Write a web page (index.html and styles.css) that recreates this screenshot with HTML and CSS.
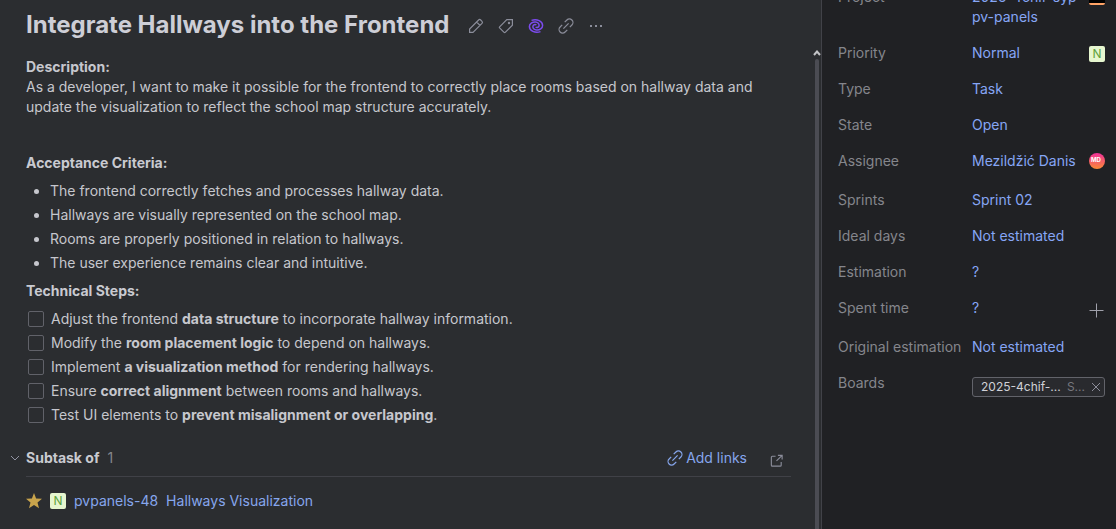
FILE: index.html
```html
<!DOCTYPE html>
<html lang="en">
<head>
<meta charset="utf-8">
<title>Integrate Hallways into the Frontend</title>
<link rel="stylesheet" href="styles.css">
</head>
<body>
<div class="app">
  <main class="issue">
    <header class="issue-header">
      <h1 class="title">Integrate Hallways into the Frontend</h1>
      <div class="toolbar">
        <button class="icon-button" aria-label="Edit"><svg class="icon" viewBox="0 0 16 16"><path d="M1.600 14.400V11L10.600 2a1.500 1.500 0 0 1 2.100 0l1.300 1.300a1.500 1.500 0 0 1 0 2.100L5 14.400ZM8.600 4l3.400 3.400"/></svg></button>
        <button class="icon-button" aria-label="Add tag"><svg class="icon" viewBox="0 0 16 16"><path d="M8.800 1.600h5.600v5.600L7.200 14.400a.8.8 0 0 1-1.100 0L1.600 9.900a.8.8 0 0 1 0-1.100Z"/><circle class="icon-dot" cx="11" cy="5" r="1.200"/></svg></button>
        <button class="icon-button icon-accent" aria-label="Assistant"><svg class="icon icon-swirl" viewBox="0 0 16 16"><path d="M3.500 2.400C9 .6 14.600 3.200 14.600 7.400 14.600 10.400 11.600 12.200 8.600 12 6 11.800 4.700 10.200 4.900 8.400 5.100 6.800 7 6 8.400 7"/><path d="M12.500 13.600C7 15.400 1.400 12.800 1.400 8.600 1.400 5.600 4.400 3.800 7.400 4 10 4.200 11.300 5.800 11.100 7.600 10.900 9.200 9 10 7.600 9"/></svg></button>
        <button class="icon-button" aria-label="Link issue"><svg class="icon" viewBox="0 0 16 16"><path d="M6.700 4.200 8.900 2A3.500 3.500 0 0 1 13.900 7L11.800 9.200M9.300 11.800 7.100 14A3.500 3.500 0 0 1 2.100 9L4.200 6.800M5.400 10.600 10.600 5.400"/></svg></button>
        <button class="icon-button" aria-label="More"><svg class="icon icon-solid" viewBox="0 0 16 16"><rect x="2" y="7" width="2" height="2"/><rect x="7" y="7" width="2" height="2"/><rect x="12" y="7" width="2" height="2"/></svg></button>
      </div>
    </header>
    <div class="scroll-area">
      <div class="content">
        <section class="description">
          <p><strong>Description:</strong><br>As a developer, I want to make it possible for the frontend to correctly place rooms based on hallway data and update the visualization to reflect the school map structure accurately.</p>
          <h2 class="heading heading-spaced">Acceptance Criteria:</h2>
          <ul class="bullets">
            <li>The frontend correctly fetches and processes hallway data.</li>
            <li>Hallways are visually represented on the school map.</li>
            <li>Rooms are properly positioned in relation to hallways.</li>
            <li>The user experience remains clear and intuitive.</li>
          </ul>
          <h2 class="heading">Technical Steps:</h2>
          <ul class="steps">
            <li><label class="step"><input class="check" type="checkbox"><span>Adjust the frontend <strong>data structure</strong> to incorporate hallway information.</span></label></li>
            <li><label class="step"><input class="check" type="checkbox"><span>Modify the <strong>room placement logic</strong> to depend on hallways.</span></label></li>
            <li><label class="step"><input class="check" type="checkbox"><span>Implement <strong>a visualization method</strong> for rendering hallways.</span></label></li>
            <li><label class="step"><input class="check" type="checkbox"><span>Ensure <strong>correct alignment</strong> between rooms and hallways.</span></label></li>
            <li><label class="step"><input class="check" type="checkbox"><span>Test UI elements to <strong>prevent misalignment or overlapping</strong>.</span></label></li>
          </ul>
        </section>
        <section class="links">
          <div class="links-header">
            <button class="toggle"><svg class="chevron" viewBox="0 0 10 10"><path d="M1 3 5 7 9 3"/></svg><span class="heading">Subtask of</span><span class="count">1</span></button>
            <button class="add-links"><svg class="icon" viewBox="0 0 16 16"><path d="M6.700 4.200 8.900 2A3.500 3.500 0 0 1 13.900 7L11.800 9.200M9.300 11.800 7.100 14A3.500 3.500 0 0 1 2.100 9L4.200 6.800M5.400 10.600 10.600 5.400"/></svg>Add links</button>
            <button class="icon-button open-links" aria-label="Open links"><svg class="icon icon-open" viewBox="0 0 16 16"><path d="M7 3.500H3.500a1 1 0 0 0-1 1v8.500a1 1 0 0 0 1 1H12a1 1 0 0 0 1-1V9.500M9.500 2.500H14V7M14 2.500 8 8.500"/></svg></button>
          </div>
          <div class="linked-issue">
            <button class="star" aria-label="Star"><svg class="star-icon" viewBox="0 0 16 16"><path d="M8 0 10.100 5.400 16 5.800 11.500 9.500 13 15.200 8 12 3 15.200 4.500 9.500 0 5.800 5.900 5.400Z"/></svg></button>
            <span class="priority">N</span>
            <a class="link" href="#">pvpanels-48</a>
            <a class="link" href="#">Hallways Visualization</a>
          </div>
        </section>
      </div>
      <div class="scrollbar">
        <svg class="scroll-arrow" viewBox="0 0 8 6"><path d="M1 5 4 1.500 7 5"/></svg>
        <div class="scroll-thumb"></div>
      </div>
    </div>
  </main>
  <aside class="sidebar">
    <div class="fields">
      <div class="field"><span class="name">Project</span><button class="value value-wide">2025-4chif-syp-pv-panels</button><span class="project-logo"></span></div>
      <div class="field"><span class="name">Priority</span><button class="value">Normal</button><span class="priority">N</span></div>
      <div class="field"><span class="name">Type</span><button class="value">Task</button></div>
      <div class="field"><span class="name">State</span><button class="value">Open</button></div>
      <div class="field field-last"><span class="name">Assignee</span><button class="value">Mezildžić Danis</button><span class="avatar">MD</span></div>
      <div class="field"><span class="name">Sprints</span><button class="value">Sprint 02</button></div>
      <div class="field"><span class="name">Ideal days</span><button class="value">Not estimated</button></div>
      <div class="field"><span class="name">Estimation</span><button class="value">?</button></div>
      <div class="field field-last"><span class="name">Spent time</span><button class="value">?</button><button class="add-time" aria-label="Add spent time"><svg class="plus" viewBox="0 0 16 16"><path d="M7.500 1.500V15.500M.500 8.500H14.500"/></svg></button></div>
      <div class="field"><span class="name">Original estimation</span><button class="value">Not estimated</button></div>
      <div class="field"><span class="name">Boards</span>
        <div class="board"><span class="board-name">2025-4chif-...</span><span class="board-sprint">S...</span><button class="remove" aria-label="Remove board"><svg class="cross" viewBox="0 0 10 10"><path d="M1 1 9 9M9 1 1 9"/></svg></button></div>
      </div>
    </div>
  </aside>
</div>
</body>
</html>
```
FILE: styles.css
```css
* {
  box-sizing: border-box;
}

body {
  margin: 0;
  background: #2b2d30;
  color: #c6c7cd;
  font: 14px/20px Inter, "Liberation Sans", sans-serif;
}

button {
  padding: 0;
  border: 0;
  background: none;
  color: inherit;
  font: inherit;
  text-align: left;
  cursor: pointer;
}

h1, h2, p, ul {
  margin: 0;
  padding: 0;
}

strong {
  font-weight: 700;
}

svg {
  display: block;
  flex: none;
  fill: none;
  stroke: currentColor;
}

.app {
  display: flex;
  height: 100vh;
  overflow: hidden;
}

.issue {
  display: flex;
  flex: 1;
  flex-direction: column;
  min-width: 0;
}

.issue-header {
  display: flex;
  gap: 19px;
  align-items: center;
  padding: 9px 0 8px 26px;
}

.title {
  color: #cdced6;
  font-size: 24px;
  font-weight: 700;
  line-height: 32px;
}

.toolbar {
  display: flex;
  gap: 14px;
  padding-top: 2px;
}

.icon-button {
  color: #8b8d9a;
}

.icon-accent {
  color: #7c4bee;
}

.icon {
  width: 16px;
  height: 16px;
  stroke-width: 1.2;
}

.icon-swirl {
  stroke-width: 1.5;
}

.icon-solid,
.icon-dot {
  fill: currentColor;
  stroke: none;
}

.scroll-area {
  display: flex;
  flex: 1;
  min-height: 0;
}

.content {
  flex: 1;
  min-width: 0;
  padding: 8px 22px 0 26px;
  overflow: hidden;
}

.scrollbar {
  display: flex;
  flex: none;
  flex-direction: column;
  align-items: center;
  width: 8px;
  padding-top: 1px;
}

.scroll-arrow {
  width: 8px;
  height: 6px;
  color: #c3c4c7;
  stroke-width: 2;
}

.scroll-thumb {
  flex: 1;
  width: 4px;
  margin-top: 3px;
  border-radius: 2px 2px 0 0;
  background: #4b4c53;
}

.description {
  max-width: 760px;
}

.heading {
  color: #c9cad0;
  font-size: 14px;
  font-weight: 700;
}

.heading-spaced {
  margin-top: 36px;
}

.bullets,
.steps {
  display: grid;
  gap: 4px;
  margin: 8px 0;
  list-style: none;
}

.bullets {
  padding-left: 24px;
  list-style: disc;
}

.step {
  display: flex;
  gap: 7px;
  align-items: center;
  padding-left: 2px;
}

.check {
  flex: none;
  width: 16px;
  height: 16px;
  margin: 0;
  border: 1px solid #616269;
  border-radius: 2px;
  appearance: none;
}

.links {
  margin-top: 23px;
}

.links-header {
  display: flex;
  align-items: center;
  padding: 0 7px 8px 0;
  border-bottom: 1px solid #404147;
}

.toggle {
  display: flex;
  gap: 6px;
  align-items: center;
  margin: 0 auto 0 -16px;
}

.chevron {
  width: 10px;
  height: 10px;
  color: #9293a3;
}

.count {
  margin-left: 2px;
  color: #85868d;
}

.add-links {
  display: flex;
  gap: 3px;
  align-items: center;
  margin-right: 22px;
  color: #86a6ed;
}

.open-links {
  padding-top: 4px;
}

.icon-open {
  width: 15px;
  height: 15px;
}

.linked-issue {
  display: flex;
  gap: 8px;
  align-items: center;
  padding-top: 14px;
}

.star-icon {
  width: 16px;
  height: 16px;
  fill: #c9a44c;
  stroke: none;
}

.link {
  color: #86a6ed;
  text-decoration: none;
}

.priority {
  flex: none;
  width: 16px;
  height: 16px;
  border-radius: 2px;
  background: #e6f6cf;
  color: #5fa33d;
  font-size: 12px;
  line-height: 16px;
  text-align: center;
}

.sidebar {
  flex: none;
  width: 295px;
  overflow: hidden;
  border-left: 1px solid #414248;
  background: #202124;
}

.fields {
  padding: 0 11px 0 16px;
  margin-top: -21px;
}

.field {
  display: grid;
  grid-template-columns: 134px 1fr auto;
  align-items: start;
  padding: 8px 0;
}

.field .priority {
  margin-top: 3px;
}

.field-last {
  padding-bottom: 11px;
}

.name {
  color: #85868c;
}

.value {
  color: #86a6f5;
}

.value-wide {
  max-width: 112px;
}

.project-logo {
  width: 16px;
  height: 16px;
  margin-top: 2px;
  border-bottom: 2px solid #ffa366;
  border-radius: 2px;
  background: #000;
}

.avatar {
  width: 16px;
  height: 16px;
  padding-left: 2px;
  margin-top: 2px;
  border-radius: 50%;
  background: linear-gradient(#f0309a, #fb8a35);
  color: #fff;
  font-size: 6px;
  font-weight: 700;
  line-height: 13px;
}

.add-time {
  margin: 4px 0 -4px;
  color: #a0a1ab;
}

.plus {
  width: 16px;
  height: 16px;
}

.board {
  display: flex;
  grid-column: 2 / 4;
  gap: 6px;
  align-items: center;
  min-width: 0;
  height: 20px;
  padding: 0 3px 0 8px;
  margin-top: 4px;
  border: 1px solid #62636a;
  border-radius: 3px;
  background: #292a2e;
  font-size: 12px;
  line-height: 18px;
  white-space: nowrap;
}

.board-name {
  flex: 1;
  color: #d0d1d7;
}

.board-sprint {
  color: #76777e;
}

.cross {
  width: 10px;
  height: 10px;
  color: #8b8c99;
}
```
